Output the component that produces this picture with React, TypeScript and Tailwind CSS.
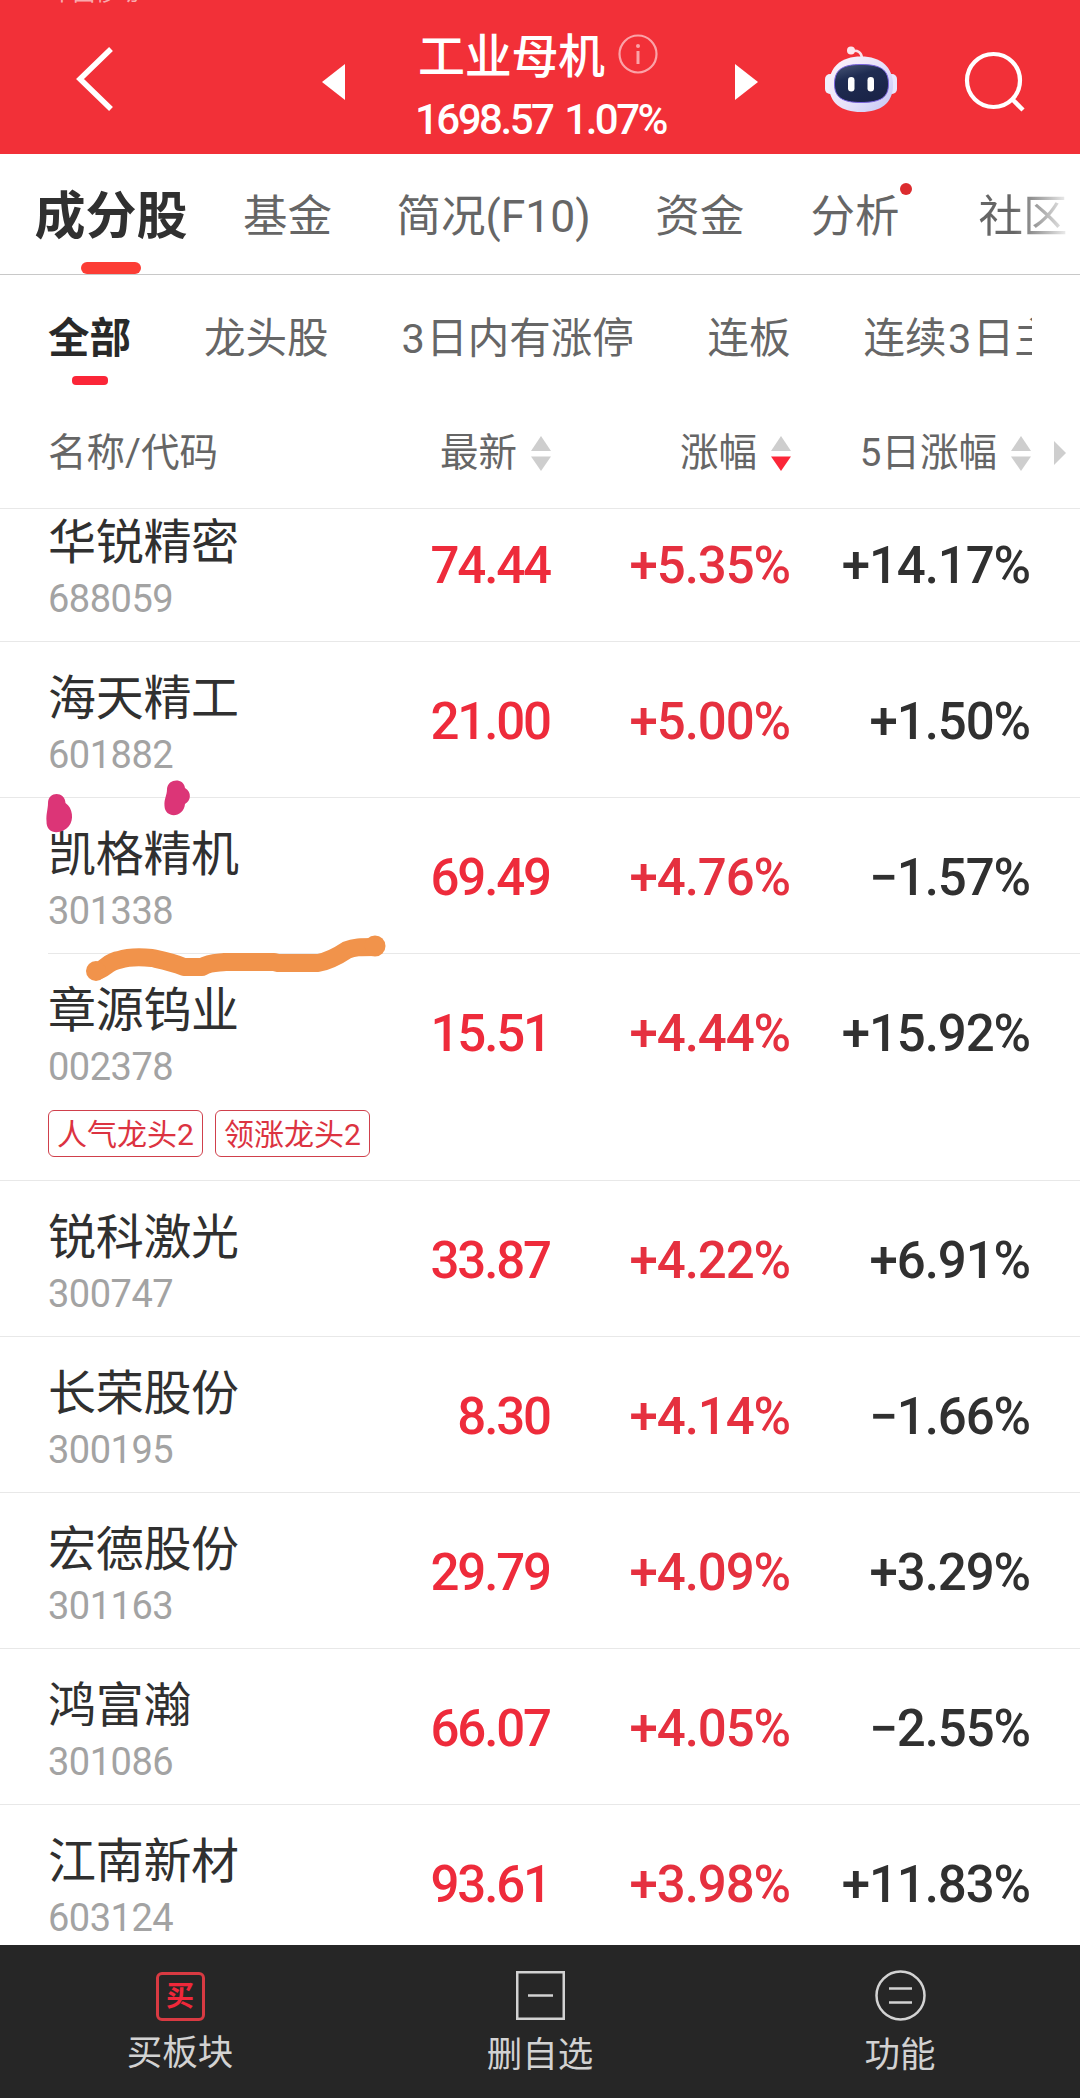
import clsx from "clsx";

const tabs = ["基金", "简况(F10)", "资金"];

const stocks = [
    { name: "华锐精密", code: "688059", price: "74.44", change: "+5.35%", five: "+14.17%" },
    { name: "海天精工", code: "601882", price: "21.00", change: "+5.00%", five: "+1.50%" },
    { name: "凯格精机", code: "301338", price: "69.49", change: "+4.76%", five: "−1.57%", inset: true },
    { name: "章源钨业", code: "002378", price: "15.51", change: "+4.44%", five: "+15.92%", tags: ["人气龙头2", "领涨龙头2"] },
    { name: "锐科激光", code: "300747", price: "33.87", change: "+4.22%", five: "+6.91%" },
    { name: "长荣股份", code: "300195", price: "8.30", change: "+4.14%", five: "−1.66%" },
    { name: "宏德股份", code: "301163", price: "29.79", change: "+4.09%", five: "+3.29%" },
    { name: "鸿富瀚", code: "301086", price: "66.07", change: "+4.05%", five: "−2.55%" },
    { name: "江南新材", code: "603124", price: "93.61", change: "+3.98%", five: "+11.83%" },
];

function Robot() {
    return (
        <svg className="w-[72px] h-[68px]" viewBox="0 0 72 68">
            <defs>
                <linearGradient id="shell" x1="0" y1="0" x2="1" y2="0.8">
                    <stop offset="0" stopColor="#fff4fa" />
                    <stop offset="0.6" stopColor="#e6e2fa" />
                    <stop offset="1" stopColor="#c9caf5" />
                </linearGradient>
                <linearGradient id="visor" x1="0" y1="0" x2="0.4" y2="1">
                    <stop offset="0" stopColor="#4a5878" />
                    <stop offset="0.4" stopColor="#1f2c52" />
                    <stop offset="1" stopColor="#1a2448" />
                </linearGradient>
            </defs>
            <path d="M27 5Q36 3.500 37 12" fill="none" stroke="#fbdfe8" strokeWidth="2.600" />
            <circle cx="26" cy="4.500" r="4" fill="#fde6ee" />
            <rect x="0" y="28" width="12" height="20" rx="5" fill="#f1effc" />
            <rect x="60" y="28" width="12" height="20" rx="5" fill="#e9e6fc" />
            <path d="M36 10.500C56 10.500 68 21 68 39C68 57 56 66 36 66C16 66 4 57 4 39C4 21 16 10.500 36 10.500Z" fill="url(#shell)" />
            <path d="M36 18.500C56 18.500 63.500 24 63.500 38C63.500 51 56 56.500 36 56.500C17 56.500 9.500 51 9.500 38C9.500 24 17 18.500 36 18.500Z" fill="url(#visor)" stroke="#7a63e0" strokeWidth="1" />
            <rect x="23" y="31" width="6.500" height="14.500" rx="3.250" fill="#fff" />
            <rect x="42.500" y="31" width="6.500" height="14.500" rx="3.250" fill="#fff" />
        </svg>
    );
}

function Sort({ active }: { active?: boolean }) {
    return (
        <svg className="w-5 h-[35px]" viewBox="0 0 20 35">
            <path d="M10 0L20 15H0Z" fill="#cecece" />
            <path d="M0 20.500H20L10 35Z" fill={active ? "#fb2638" : "#cecece"} />
        </svg>
    );
}

export default function App() {
    return (
        <div className="relative w-[1080px] h-[2098px] overflow-hidden flex flex-col bg-white font-[Roboto,'Noto_Sans_CJK_SC',sans-serif] text-[#666]">
            {/* Header */}
            <header className="relative h-[154px] shrink-0 bg-[#f23038] text-white flex items-center overflow-hidden">
                <div className="absolute left-[51px] top-[-18px] text-[22px] leading-[22px] text-white/60">中国移动</div>
                <svg className="ml-[75px] mt-1 w-10 h-[66px]" viewBox="0 0 40 66">
                    <path d="M36 3L5 33L36 63" fill="none" stroke="#fff" strokeWidth="5.500" />
                </svg>
                <svg className="ml-[207px] mt-[10px] w-[23px] h-9" viewBox="0 0 23 36">
                    <path d="M23 0V36L0 18Z" fill="#fff" />
                </svg>
                <div className="ml-[70px] w-[262px] h-full">
                    <div className="flex items-start mt-[33px]">
                        <span className="ml-[3px] text-[47px] leading-[48px] tracking-[-0.3px] font-medium">工业母机</span>
                        <svg className="ml-[13px] mt-[1px] w-10 h-10" viewBox="0 0 40 40">
                            <circle cx="20" cy="20" r="18.500" fill="none" stroke="#fba3a8" strokeWidth="2.200" />
                            <path d="M20 17V30" stroke="#fba3a8" strokeWidth="3" />
                            <circle cx="20" cy="12" r="2" fill="#fba3a8" />
                        </svg>
                    </div>
                    <p className="mt-[15px] text-[42px] leading-[48px] tracking-[-2.5px] [word-spacing:4px] font-medium whitespace-nowrap">1698.57 1.07%</p>
                </div>
                <svg className="ml-[58px] mt-[10px] w-[23px] h-9" viewBox="0 0 23 36">
                    <path d="M0 0V36L23 18Z" fill="#fff" />
                </svg>
                <div className="ml-[67px] mt-[6px]">
                    <Robot />
                </div>
                <svg className="ml-[67px] mt-[9px] w-[62px] h-[62px]" viewBox="0 0 62 62">
                    <circle cx="29.500" cy="29.500" r="26.500" fill="none" stroke="#fff" strokeWidth="4.200" />
                    <path d="M48 48L59 59" stroke="#fff" strokeWidth="4.500" />
                </svg>
            </header>

            {/* Main tabs */}
            <nav className="h-[121px] shrink-0 border-b border-[#c8c8c8] flex whitespace-nowrap text-[44.5px] leading-[64px] pt-[31px]">
                <div className="ml-[35px] w-[152px] flex flex-col items-center">
                    <span className="text-[51px] font-bold text-[#303030]">成分股</span>
                    <span className="mt-[13px] w-[60px] h-3 rounded-full bg-[#fc3d35]" />
                </div>
                <div className="ml-[56px] flex gap-[64.5px]">
                    {tabs.map((tab) => (
                        <span key={tab}>{tab}</span>
                    ))}
                    <span className="relative ml-[1.5px]">
                        分析
                        <i className="absolute -right-[13px] -top-[2px] w-3 h-3 rounded-full bg-[#dc2c2f]" />
                    </span>
                    <span className="ml-[14.5px] bg-linear-to-r from-[#666] from-40% to-[#eee] bg-clip-text text-transparent">社区</span>
                </div>
            </nav>

            {/* Filters */}
            <div className="h-[126px] shrink-0 ml-[48px] mr-[48px] flex overflow-hidden whitespace-nowrap text-[41.5px] leading-[60px] pt-[34px]">
                <div className="flex flex-col items-center">
                    <span className="font-bold text-[#292929]">全部</span>
                    <span className="mt-[7px] w-9 h-[9px] rounded-[4px] bg-[#fb2638]" />
                </div>
                <span className="ml-[73px]">龙头股</span>
                <span className="ml-[73px]"><span className="pr-[1.5px]">3</span>日内有涨停</span>
                <span className="ml-[73.5px]">连板</span>
                <span className="ml-[73px]">连续<span className="px-[1.5px]">3</span>日主</span>
            </div>

            {/* Column heads */}
            <div className="h-[108px] shrink-0 border-b border-[#e8e8e8] flex pt-[25px] text-[38.5px] leading-[54px] whitespace-nowrap">
                <span className="ml-[48px] w-[300px]">名称/代码</span>
                <div className="w-[203px] h-[54px] flex justify-end items-center gap-[14px]">最新<Sort /></div>
                <div className="w-[240px] h-[54px] flex justify-end items-center gap-[14px]">涨幅<Sort active /></div>
                <div className="w-[240px] h-[54px] flex justify-end items-center gap-[14px]">5日涨幅<Sort /></div>
                <svg className="ml-[23px] mt-[15px] w-3 h-6" viewBox="0 0 12 24">
                    <path d="M0 0V24L12 12Z" fill="#cecece" />
                </svg>
            </div>

            {/* Stock list, scrolled a little under the column heads */}
            <main className="h-[1436px] shrink-0 overflow-hidden">
                <div className="-mt-[23px]">
                    {stocks.map((s) => (
                        <div key={s.code} className={clsx("relative", s.tags ? "h-[227px]" : "h-[156px]")}>
                            <div className="flex h-[156px] text-[51px] leading-[60px] font-medium">
                                <div className="ml-[48px] w-[272px] pt-[28px]">
                                    <p className="text-[48px] leading-[58px] tracking-[-0.3px] font-normal text-[#303030]">{s.name}</p>
                                    <p className="mt-[5px] text-[38px] leading-[44px] tracking-[-0.5px] font-normal text-[#a3a3a3]">{s.code}</p>
                                </div>
                                <p className="w-[230px] pt-[50px] text-right tracking-[-2.1px] text-[#ee2b3b]">{s.price}</p>
                                <p className="w-[240px] pt-[50px] text-right tracking-[-1.1px] text-[#e5303f]">{s.change}</p>
                                <p className="w-[240px] pt-[50px] text-right tracking-[-1.1px] text-[#303030]">{s.five}</p>
                            </div>
                            {s.tags && (
                                <div className="flex gap-3 ml-[48px]">
                                    {s.tags.map((tag) => (
                                        <span key={tag} className="w-[155px] h-[47px] pt-[2px] flex items-center justify-center rounded-[6px] border border-[#d0404c] text-[30px] text-[#dc3341] whitespace-nowrap">
                                            {tag}
                                        </span>
                                    ))}
                                </div>
                            )}
                            <div className={clsx("absolute bottom-0 right-0 h-px bg-[#e8e8e8]", s.inset ? "left-[48px]" : "left-0")} />
                        </div>
                    ))}
                </div>
            </main>

            {/* Bottom bar */}
            <footer className="h-[153px] shrink-0 bg-[#262626] flex text-[35.5px] leading-[42px] text-[#d2d2d2]">
                <div className="w-[360px] pt-[27px] flex flex-col items-center">
                    <span className="w-[49px] h-[49px] border-3 border-[#d83a42] rounded-[6px] flex items-center justify-center text-[28px] leading-none font-bold text-[#f0283a]">买</span>
                    <span className="mt-[11px]">买板块</span>
                </div>
                <div className="w-[360px] pt-[26px] flex flex-col items-center">
                    <svg className="w-[49px] h-[49px]" viewBox="0 0 49 49" fill="none" stroke="#d2d2d2" strokeWidth="2.500">
                        <rect x="1.250" y="1.250" width="46.500" height="46.500" />
                        <path d="M12 24.500H37" />
                    </svg>
                    <span className="mt-[14px]">删自选</span>
                </div>
                <div className="w-[360px] pt-[25px] flex flex-col items-center">
                    <svg className="w-[51px] h-[51px]" viewBox="0 0 51 51" fill="none" stroke="#d2d2d2" strokeWidth="2.500">
                        <circle cx="25.500" cy="25.500" r="24" />
                        <path d="M14 18.500H37M14 32.500H37" />
                    </svg>
                    <span className="mt-[13px]">功能</span>
                </div>
            </footer>

            {/* Hand-drawn marks over the list */}
            <svg className="absolute left-0 top-[770px] w-[400px] h-[220px] pointer-events-none" viewBox="0 770 400 220">
                <path d="M48 803C48 791 65 791 65.500 803C73 808 74 820 69 826C63 834 46 836 46.500 821C46 814 48 809 48 803Z" fill="#dc3577" />
                <path d="M167 789C168 778 184 778 185 788C192 792 191 801 185 804C184 818 165 819 164.500 806C164 798 167 796 167 789Z" fill="#dc3577" />
                <path d="M96 971C104 971 108 961 119 960C128 957 143 957 152 958C166 961 172 962 184 967H202C210 962 218 963 225 962H274L278 963H318C329 961 341 954 347 950C354 947 360 947 375 947" fill="none" stroke="#f1934b" strokeWidth="18" strokeLinecap="round" strokeLinejoin="round" />
                <circle cx="96" cy="971" r="10" fill="#f1934b" />
                <circle cx="375" cy="946" r="10.500" fill="#f1934b" />
            </svg>
        </div>
    );
}
